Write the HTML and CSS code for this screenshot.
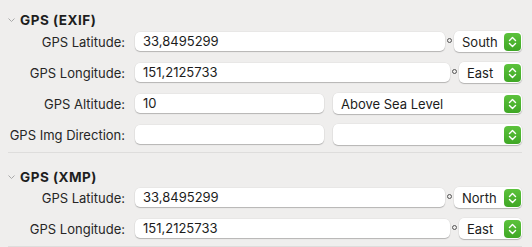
FILE: index.html
```html
<!DOCTYPE html>
<html lang="en">
<head>
    <meta charset="UTF-8">
    <meta name="viewport" content="width=device-width, initial-scale=1.0">
    <title>GPS Metadata</title>
    <link rel="stylesheet" href="styles.css">
</head>
<body>
    <section class="section">
        <div class="section-head">
            <svg class="disclosure" width="7" height="4" viewBox="0 0 7 4"><polyline points="0.5,0.5 3.5,3.5 6.5,0.5" /></svg>
            <span>GPS (EXIF)</span>
        </div>
        <div class="row">
            <label>GPS Latitude:</label>
            <div class="field">
                <div class="input">33,8495299</div>
                <span class="deg"></span>
                <div class="popup wide">
                    <span>South</span>
                    <span class="stepper"><svg width="9" height="12" viewBox="0 0 9 12"><polyline points="1.5,4.5 4.5,1.5 7.5,4.5" /><polyline points="1.5,7.5 4.5,10.5 7.5,7.5" /></svg></span>
                </div>
            </div>
        </div>
        <div class="row">
            <label>GPS Longitude:</label>
            <div class="field">
                <div class="input">151,2125733</div>
                <span class="deg"></span>
                <div class="popup narrow">
                    <span>East</span>
                    <span class="stepper"><svg width="9" height="12" viewBox="0 0 9 12"><polyline points="1.5,4.5 4.5,1.5 7.5,4.5" /><polyline points="1.5,7.5 4.5,10.5 7.5,7.5" /></svg></span>
                </div>
            </div>
        </div>
        <div class="row">
            <label>GPS Altitude:</label>
            <div class="field split">
                <div class="input">10</div>
                <div class="popup">
                    <span>Above Sea Level</span>
                    <span class="stepper"><svg width="9" height="12" viewBox="0 0 9 12"><polyline points="1.5,4.5 4.5,1.5 7.5,4.5" /><polyline points="1.5,7.5 4.5,10.5 7.5,7.5" /></svg></span>
                </div>
            </div>
        </div>
        <div class="row">
            <label>GPS Img Direction:</label>
            <div class="field split">
                <div class="input"></div>
                <div class="popup">
                    <span></span>
                    <span class="stepper"><svg width="9" height="12" viewBox="0 0 9 12"><polyline points="1.5,4.5 4.5,1.5 7.5,4.5" /><polyline points="1.5,7.5 4.5,10.5 7.5,7.5" /></svg></span>
                </div>
            </div>
        </div>
    </section>
    <section class="section">
        <div class="section-head">
            <svg class="disclosure" width="7" height="4" viewBox="0 0 7 4"><polyline points="0.5,0.5 3.5,3.5 6.5,0.5" /></svg>
            <span>GPS (XMP)</span>
        </div>
        <div class="row">
            <label>GPS Latitude:</label>
            <div class="field">
                <div class="input">33,8495299</div>
                <span class="deg"></span>
                <div class="popup wide">
                    <span>North</span>
                    <span class="stepper"><svg width="9" height="12" viewBox="0 0 9 12"><polyline points="1.5,4.5 4.5,1.5 7.5,4.5" /><polyline points="1.5,7.5 4.5,10.5 7.5,7.5" /></svg></span>
                </div>
            </div>
        </div>
        <div class="row">
            <label>GPS Longitude:</label>
            <div class="field">
                <div class="input">151,2125733</div>
                <span class="deg"></span>
                <div class="popup narrow">
                    <span>East</span>
                    <span class="stepper"><svg width="9" height="12" viewBox="0 0 9 12"><polyline points="1.5,4.5 4.5,1.5 7.5,4.5" /><polyline points="1.5,7.5 4.5,10.5 7.5,7.5" /></svg></span>
                </div>
            </div>
        </div>
    </section>
</body>
</html>
```

FILE: styles.css
```css
body {
    font-family: 'Inter', 'Liberation Sans', sans-serif;
    font-size: 13px;
    color: #262626;
    background-color: #efeeed;
    margin: 0;
    padding: 0;
}

.section {
    margin: 0 10px 0 8px;
    padding-bottom: 2px;
    border-bottom: 1px solid #dedddc;
}

.section + .section {
    padding-top: 4px;
}

.section-head {
    display: flex;
    align-items: flex-end;
    height: 27px;
    margin-bottom: -1px;
    line-height: 14px;
    font-size: 13.5px;
    font-weight: 700;
    letter-spacing: 0.5px;
    color: #1e1e1e;
}

.section + .section .section-head {
    margin-bottom: -2px;
}

.disclosure {
    margin: 0 5px 5px 0;
}

.disclosure polyline {
    fill: none;
    stroke: #a9a9a9;
    stroke-width: 1;
}

.row {
    display: grid;
    grid-template-columns: 117px 1fr;
    column-gap: 10px;
    height: 31px;
    align-items: center;
}

.row label {
    text-align: right;
    white-space: nowrap;
}

.field {
    display: flex;
    align-items: center;
}

.field.split {
    display: grid;
    grid-template-columns: 1fr 1fr;
    column-gap: 9px;
}

.input {
    flex: 1;
    height: 19px;
    line-height: 19px;
    padding-left: 8px;
    background-color: #fff;
    border-radius: 5px;
    color: #1c1c1c;
    box-shadow: 0 0 0 0.5px rgba(0, 0, 0, 0.06), 0 1px 1px rgba(0, 0, 0, 0.22);
}

/* small degree ring between value and direction */
.deg {
    flex: none;
    width: 3px;
    height: 3px;
    margin: -3px 2px 0 2px;
    border: 1px solid #555;
    border-radius: 50%;
}

.popup {
    display: flex;
    align-items: center;
    justify-content: space-between;
    height: 21px;
    padding: 0 1px 0 8px;
    background-color: #fff;
    border-radius: 5px;
    color: #1c1c1c;
    box-shadow: 0 0 0 0.5px rgba(0, 0, 0, 0.06), 0 1px 1px rgba(0, 0, 0, 0.22);
    box-sizing: border-box;
}

.popup.wide {
    width: 68px;
}

.popup.narrow {
    width: 63px;
}

.stepper {
    display: flex;
    align-items: center;
    justify-content: center;
    width: 17px;
    height: 18px;
    border-radius: 4px;
    background: linear-gradient(#5cc23c, #3fa725);
}

.stepper polyline {
    fill: none;
    stroke: #fff;
    stroke-width: 1.4;
    stroke-linecap: round;
    stroke-linejoin: round;
}
```
